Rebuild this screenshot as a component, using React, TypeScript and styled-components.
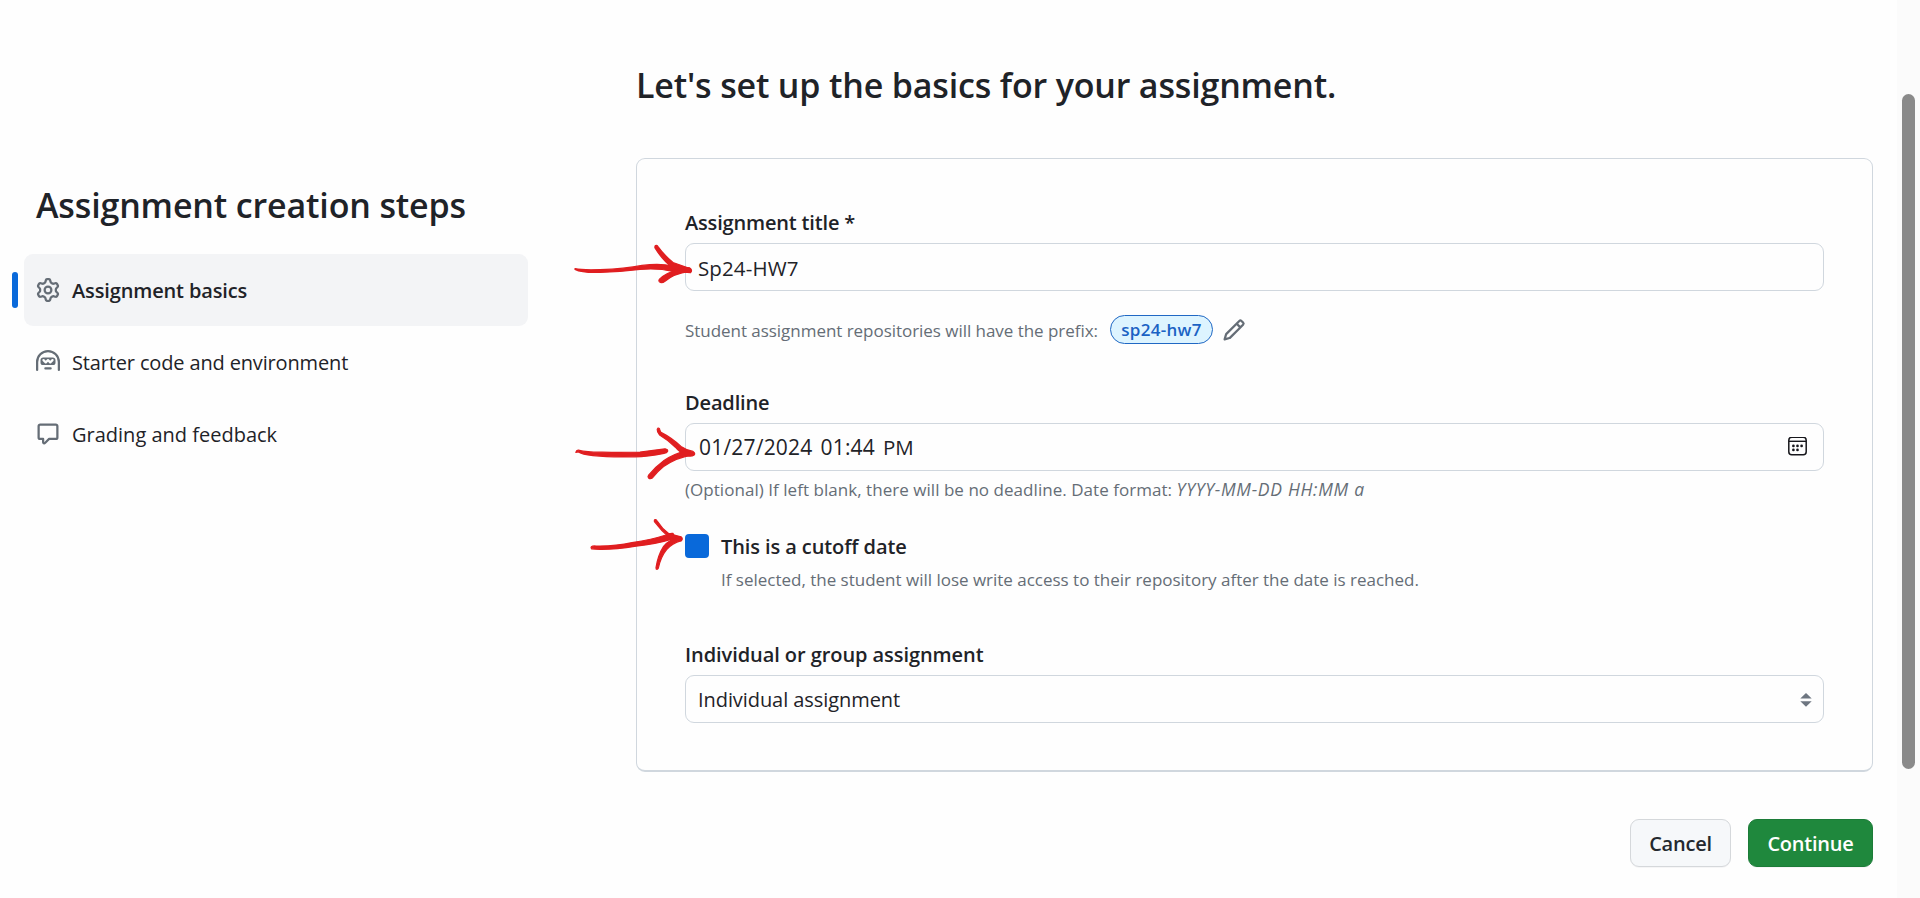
import React from 'react';
import styled, { createGlobalStyle } from 'styled-components';

const GlobalStyle = createGlobalStyle`
  * { box-sizing: border-box; }
  body {
    margin: 0;
    overflow: hidden;
    background: #fefefe;
    color: #1f2328;
    font-family: 'Open Sans', 'Noto Sans', sans-serif;
    font-size: 20px;
  }
  h1, h2, p, ul { margin: 0; padding: 0; }
`;

const Page = styled.div`
  position: relative;
  display: flex;
  height: 898px;
`;

/* ---------- Sidebar ---------- */

const Sidebar = styled.nav`
  flex: none;
  width: 528px;
  padding: 178px 0 0 24px;
`;

const Heading = styled.h1<{ $track: number }>`
  font-size: 34px;
  font-weight: 600;
  line-height: 54px;
  letter-spacing: ${(p) => p.$track}px;
  white-space: nowrap;
`;

const SidebarHeading = styled(Heading)`
  padding-left: 12px;
  margin-bottom: 22px;
`;

const StepList = styled.ul`
  list-style: none;
`;

const Step = styled.li<{ $active?: boolean; $track: number }>`
  position: relative;
  display: flex;
  align-items: center;
  gap: 12px;
  height: 72px;
  padding: 0 12px;
  border-radius: 9px;
  background: ${(p) => (p.$active ? '#f3f4f6' : 'transparent')};
  font-weight: ${(p) => (p.$active ? 600 : 400)};
  letter-spacing: ${(p) => p.$track}px;
  white-space: nowrap;

  &::before {
    content: '';
    display: ${(p) => (p.$active ? 'block' : 'none')};
    position: absolute;
    left: -12px;
    top: 18px;
    width: 6px;
    height: 36px;
    border-radius: 3px;
    background: #0969da;
  }
`;

const Icon = styled.svg<{ $width?: number; $height?: number; $color?: string }>`
  display: block;
  flex: none;
  width: ${(p) => p.$width ?? 24}px;
  height: ${(p) => p.$height ?? 24}px;
  fill: ${(p) => p.$color ?? '#656d76'};
`;

/* ---------- Form ---------- */

const Main = styled.main`
  flex: 1;
  padding: 58px 24px 0 108px;
`;

const Card = styled.section`
  height: 614px;
  margin-top: 46px;
  padding: 47px 48px 0 48px;
  border: 1px solid #d0d7de;
  border-bottom-width: 2px;
  border-radius: 9px;
`;

const Field = styled.div<{ $gap?: number }>`
  margin-top: ${(p) => p.$gap ?? 0}px;
`;

const Label = styled.div<{ $track: number }>`
  margin-bottom: 4px;
  padding-top: 1px;
  font-weight: 600;
  line-height: 32px;
  letter-spacing: ${(p) => p.$track}px;
`;

const Control = styled.div<{ $track: number; $size?: number }>`
  display: flex;
  align-items: center;
  height: 48px;
  padding: 1px 12px 0;
  border: 1px solid #d0d7de;
  border-radius: 9px;
  font-size: ${(p) => p.$size ?? 20}px;
  letter-spacing: ${(p) => p.$track}px;
  line-height: 30px;
`;

const DateParts = styled.div`
  display: flex;
  flex: 1;
  align-items: baseline;
  gap: 8px;
  padding-left: 1px;
`;

const TimePeriod = styled.span`
  font-size: 20.5px;
  letter-spacing: 0;
`;

const DatePicker = styled(Control)`
  padding: 0 16px 0 12px;
`;

const Hint = styled.p<{ $track?: number }>`
  font-size: 17px;
  line-height: 28px;
  color: #656d76;
  letter-spacing: ${(p) => p.$track ?? 0}px;
  white-space: nowrap;
`;

const DateHint = styled(Hint)`
  height: 28px;
  margin-top: 5px;
`;

const Format = styled.em`
  font-size: 17.5px;
  line-height: 1;
  letter-spacing: 0.7px;
`;

const PrefixRow = styled.div`
  display: flex;
  align-items: center;
  height: 29px;
  margin-top: 24px;
`;

const PrefixHint = styled(Hint)`
  padding-top: 2px;
  width: 425px;
`;

const Prefix = styled.span`
  width: 103px;
  height: 29px;
  margin-right: 9px;
  border: 1px solid #2068c4;
  border-radius: 15px;
  background: #ddf4ff;
  color: #1b62c4;
  font-size: 17px;
  font-weight: 600;
  line-height: 27px;
  letter-spacing: 0.3px;
  text-align: center;
`;

const CutoffRow = styled.div`
  display: grid;
  grid-template-columns: 24px 1fr;
  column-gap: 12px;
  margin-top: 26px;
`;

const Checkbox = styled.span`
  width: 24px;
  height: 24px;
  margin-top: 4px;
  border-radius: 4px;
  background: #0969da;
`;

const CutoffLabel = styled(Label)`
  margin-bottom: 3px;
`;

const Select = styled(Control)`
  justify-content: space-between;
  padding-right: 11px;
`;

const Actions = styled.div`
  display: flex;
  justify-content: flex-end;
  gap: 17px;
  margin-top: 47px;
`;

const Button = styled.button<{ $primary?: boolean }>`
  width: ${(p) => (p.$primary ? 125 : 101)}px;
  height: 48px;
  padding: 0;
  border: 1px solid ${(p) => (p.$primary ? '#1c7c38' : '#d5d8db')};
  border-radius: 9px;
  background: ${(p) => (p.$primary ? '#1f883d' : '#f6f8fa')};
  box-shadow: 0 1px 0 rgba(31, 35, 40, 0.04);
  color: ${(p) => (p.$primary ? '#ffffff' : '#24292f')};
  font: inherit;
  font-weight: 600;
  letter-spacing: -0.22px;
`;

/* ---------- Scrollbar and pen marks ---------- */

const ScrollTrack = styled.div`
  flex: none;
  width: 23px;
  padding: 94px 5px 0;
  background: #fbfbfb;
`;

const ScrollThumb = styled.div`
  height: 675px;
  border-radius: 7px;
  background: #8a8a8a;
`;

const PenMarks = styled.svg`
  position: absolute;
  left: 570px;
  top: 240px;
  width: 130px;
  height: 340px;
  fill: #e01e20;
  stroke: #e01e20;
  stroke-width: 1.2;
  stroke-linecap: round;
  stroke-linejoin: round;
  pointer-events: none;
`;

const GearIcon = () => (
  <Icon viewBox="0 0 16 16">
    <path d="M8 0a8.2 8.2 0 0 1 .701.031C9.444.095 9.99.645 10.16 1.29l.288 1.107c.018.066.079.158.212.224.231.114.454.243.668.386.123.082.233.09.299.071l1.103-.303c.644-.176 1.392.021 1.82.63.27.385.506.792.704 1.218.315.675.111 1.422-.364 1.891l-.814.806c-.049.048-.098.147-.088.294.016.257.016.515 0 .772-.01.147.038.246.088.294l.814.806c.475.469.679 1.216.364 1.891a7.977 7.977 0 0 1-.704 1.217c-.428.61-1.176.807-1.82.63l-1.102-.302c-.067-.019-.177-.011-.3.071a5.909 5.909 0 0 1-.668.386c-.133.066-.194.158-.211.224l-.29 1.106c-.168.646-.715 1.196-1.458 1.26a8.006 8.006 0 0 1-1.402 0c-.743-.064-1.289-.614-1.458-1.26l-.289-1.106c-.018-.066-.079-.158-.212-.224a5.738 5.738 0 0 1-.668-.386c-.123-.082-.233-.09-.299-.071l-1.103.303c-.644.176-1.392-.021-1.82-.63a8.12 8.12 0 0 1-.704-1.218c-.315-.675-.111-1.422.363-1.891l.815-.806c.05-.048.098-.147.088-.294a6.214 6.214 0 0 1 0-.772c.01-.147-.038-.246-.088-.294l-.815-.806C.635 6.045.431 5.298.746 4.623a7.92 7.92 0 0 1 .704-1.217c.428-.61 1.176-.807 1.82-.63l1.102.302c.067.019.177.011.3-.071.214-.143.437-.272.668-.386.133-.066.194-.158.211-.224l.29-1.106C6.009.645 6.556.095 7.299.03 7.53.01 7.764 0 8 0Zm-.571 1.525c-.036.003-.108.036-.137.146l-.289 1.105c-.147.561-.549.967-.998 1.189-.173.086-.34.183-.5.29-.417.278-.97.423-1.529.27l-1.103-.303c-.109-.03-.175.016-.195.045-.22.312-.412.644-.573.99-.014.031-.021.11.059.19l.815.806c.411.406.562.957.53 1.456a4.709 4.709 0 0 0 0 .582c.032.499-.119 1.05-.53 1.456l-.815.806c-.081.08-.073.159-.059.19.162.346.353.677.573.989.02.03.085.076.195.046l1.102-.303c.56-.153 1.113-.008 1.53.27.161.107.328.204.501.29.447.222.85.629.997 1.189l.289 1.105c.029.109.101.143.137.146a6.6 6.6 0 0 0 1.142 0c.036-.003.108-.036.137-.146l.289-1.105c.147-.561.549-.967.998-1.189.173-.086.34-.183.5-.29.417-.278.97-.423 1.529-.27l1.103.303c.109.029.175-.016.195-.045.22-.313.411-.644.573-.99.014-.031.021-.11-.059-.19l-.815-.806c-.411-.406-.562-.957-.53-1.456a4.709 4.709 0 0 0 0-.582c-.032-.499.119-1.05.53-1.456l.815-.806c.081-.08.073-.159.059-.19a6.464 6.464 0 0 0-.573-.989c-.02-.03-.085-.076-.195-.046l-1.102.303c-.56.153-1.113.008-1.53-.27a4.44 4.44 0 0 0-.501-.29c-.447-.222-.85-.629-.997-1.189l-.289-1.105c-.029-.11-.101-.143-.137-.146a6.6 6.6 0 0 0-1.142 0ZM11 8a3 3 0 1 1-6 0 3 3 0 0 1 6 0ZM9.5 8a1.5 1.5 0 1 0-3.001.001A1.5 1.5 0 0 0 9.5 8Z" />
  </Icon>
);

const HubotIcon = () => (
  <Icon viewBox="0 0 16 16">
    <path d="M0 8a8 8 0 1 1 16 0v5.25a.75.75 0 0 1-1.5 0V8a6.5 6.5 0 1 0-13 0v5.25a.75.75 0 0 1-1.5 0V8Zm5.5 4.25a.75.75 0 0 1 .75-.75h3.5a.75.75 0 0 1 0 1.5h-3.5a.75.75 0 0 1-.75-.75ZM3 6.75C3 5.784 3.784 5 4.75 5h6.5c.966 0 1.75.784 1.75 1.75v1.5A1.75 1.75 0 0 1 11.25 10h-6.5A1.75 1.75 0 0 1 3 8.25Zm1.47-.53a.75.75 0 0 0 0 1.06l1.5 1.5a.75.75 0 0 0 1.06 0L8 7.81l.97.97a.75.75 0 0 0 1.06 0l1.5-1.5a.749.749 0 0 0-.326-1.275.749.749 0 0 0-.734.215l-.97.97-.97-.97a.75.75 0 0 0-1.06 0l-.97.97-.97-.97a.75.75 0 0 0-1.06 0Z" />
  </Icon>
);

const CommentIcon = () => (
  <Icon viewBox="0 0 16 16">
    <path d="M1 2.75C1 1.784 1.784 1 2.75 1h10.5c.966 0 1.75.784 1.75 1.75v7.5A1.75 1.75 0 0 1 13.25 12H9.06l-2.573 2.573A1.458 1.458 0 0 1 4 13.543V12H2.75A1.75 1.75 0 0 1 1 10.25Zm1.75-.25a.25.25 0 0 0-.25.25v7.5c0 .138.112.25.25.25h2a.75.75 0 0 1 .75.75v2.19l2.72-2.72a.749.749 0 0 1 .53-.22h4.5a.25.25 0 0 0 .25-.25v-7.5a.25.25 0 0 0-.25-.25Z" />
  </Icon>
);

const PencilIcon = () => (
  <Icon viewBox="0 0 16 16">
    <path d="M11.013 1.427a1.75 1.75 0 0 1 2.474 0l1.086 1.086a1.75 1.75 0 0 1 0 2.474l-8.61 8.61c-.21.21-.47.364-.756.445l-3.251.93a.75.75 0 0 1-.927-.928l.929-3.25c.081-.286.235-.547.445-.758l8.61-8.61Zm.176 4.823L9.75 4.81l-6.286 6.287a.253.253 0 0 0-.064.108l-.558 1.953 1.953-.558a.253.253 0 0 0 .108-.064Zm1.238-3.763a.25.25 0 0 0-.354 0L10.811 3.75l1.439 1.44 1.263-1.263a.25.25 0 0 0 0-.354Z" />
  </Icon>
);

const CalendarIcon = () => (
  <Icon viewBox="0 0.5 19 20" $width={19} $height={20} $color="#17171c">
    <rect x="0.8" y="0.8" width="17.4" height="17.4" rx="3" fill="none" stroke="#17171c" strokeWidth="1.5" />
    <path d="M1 4.1h17v1.4H1z" />
    <circle cx="5.4" cy="9.4" r="1.35" />
    <circle cx="9.5" cy="9.4" r="1.35" />
    <circle cx="13.6" cy="9.4" r="1.35" />
    <circle cx="5.4" cy="13.4" r="1.35" />
    <circle cx="9.5" cy="13.4" r="1.35" />
  </Icon>
);

const SortIcon = () => (
  <Icon viewBox="0 0 12 16" $width={12} $height={16} $color="#6e7681">
    <path d="M0.3 6.4 6 0.9 11.7 6.4zM0.3 9.2h11.4L6 14.8z" />
  </Icon>
);

export default function App() {
  return (
    <>
      <GlobalStyle />
      <Page>
        <Sidebar>
          <SidebarHeading as="h2" $track={-0.15}>Assignment creation steps</SidebarHeading>
          <StepList>
            <Step $active $track={-0.14}>
              <GearIcon />
              Assignment basics
            </Step>
            <Step $track={-0.15}>
              <HubotIcon />
              Starter code and environment
            </Step>
            <Step $track={0}>
              <CommentIcon />
              Grading and feedback
            </Step>
          </StepList>
        </Sidebar>

        <Main>
          <Heading $track={-0.17}>Let's set up the basics for your assignment.</Heading>
          <Card>
            <Field>
              <Label $track={-0.17}>Assignment title *</Label>
              <Control $size={20.5} $track={0.12}>Sp24-HW7</Control>
              <PrefixRow>
                <PrefixHint $track={-0.04}>Student assignment repositories will have the prefix:</PrefixHint>
                <Prefix>sp24-hw7</Prefix>
                <PencilIcon />
              </PrefixRow>
            </Field>

            <Field $gap={42}>
              <Label $track={-0.15}>Deadline</Label>
              <DatePicker $size={21} $track={0.2}>
                <DateParts>
                  <span>01/27/2024</span>
                  <span>01:44</span>
                  <TimePeriod>PM</TimePeriod>
                </DateParts>
                <CalendarIcon />
              </DatePicker>
              <DateHint $track={0.04}>
                (Optional) If left blank, there will be no deadline. Date format: <Format>YYYY-MM-DD HH:MM a</Format>
              </DateHint>
            </Field>

            <CutoffRow>
              <Checkbox />
              <div>
                <CutoffLabel $track={-0.1}>This is a cutoff date</CutoffLabel>
                <Hint $track={-0.01}>
                  If selected, the student will lose write access to their repository after the date is reached.
                </Hint>
              </div>
            </CutoffRow>

            <Field $gap={44}>
              <Label $track={-0.07}>Individual or group assignment</Label>
              <Select $track={-0.07}>
                Individual assignment
                <SortIcon />
              </Select>
            </Field>
          </Card>

          <Actions>
            <Button>Cancel</Button>
            <Button $primary>Continue</Button>
          </Actions>
        </Main>

        <ScrollTrack>
          <ScrollThumb />
        </ScrollTrack>

        <PenMarks viewBox="0 0 130 340">
          {/* mark beside the title field */}
          <path d="M5 28.6Q12 30.2 30 29.6Q55 28.8 72 25.4Q85 23.8 95 24.8L110 27L119.4 27.8Q123 30 120.6 32.6L103 31.4Q88 27.8 70 29.4Q50 31.8 30 32.4Q12 33 5 29.4Z" />
          <path d="M85.5 5.6Q87 5 88 6.6Q94 15 103 22.5L120 28.6L118 32L104 29Q93 21 85 8Q84.6 6.2 85.5 5.6Z" />
          <path d="M89.5 39.2Q96 32.5 112 28.6L119 31.4Q104 33.6 95 41.2Q91.5 44 89.2 41.6Q88.4 40.4 89.5 39.2Z" />
          {/* mark beside the deadline field */}
          <path d="M5.8 212.4Q6.4 210 8.4 210.2Q18 212.4 32 212.2Q55 212.8 70 212Q84 210.4 95 208.8Q98.2 209.2 97.6 211.6Q96.8 213.4 94 213.4Q76 217.2 62 216.8Q38 217.2 23 215.6Q12 214.6 8 211.8Z" />
          <path d="M88 188.2Q89.6 187.8 89.8 190L91 192.4Q101 197.4 111 206.4Q117 210.4 123 211.4Q125.6 213 124.2 215Q121 217 116 215.4Q109 211.8 105.4 207.2Q98 200 89.6 195Q87 192.4 87.2 189.4Z" />
          <path d="M78.6 235.2Q86 226.4 94 220.6Q104 213.6 118 210.4L123.4 214.8Q106 217.4 93.6 226.6Q88 231 82.4 238Q80.2 239.4 78.6 238Q77.4 236.8 78.6 235.2Z" />
          {/* mark beside the cutoff checkbox */}
          <path d="M21.4 306.6Q22.4 305.8 26 306Q45 306.4 62 302.6Q82 299.6 96 295Q99.6 293 103 293.4Q105.4 296.4 101 299.4Q86 304 66 306.2Q45 309.6 30 309.4Q24 309 21.6 308.8Q20.6 307.6 21.4 306.6Z" />
          <path d="M85 279.6Q86.4 279.2 87 280.8Q92 288.6 98.6 293.6L111 296.8Q113.6 299 111 300.8L101 299Q91 290.6 84.4 281.6Q84 280.2 85 279.6Z" />
          <path d="M86 327.6Q88 315 93.6 306.4Q99 299.6 110 296.6L111.4 300.6Q102 303.2 96.6 309.6Q90.6 317 88.4 328Q87.4 330 86.2 329Z" />
        </PenMarks>
      </Page>
    </>
  );
}
